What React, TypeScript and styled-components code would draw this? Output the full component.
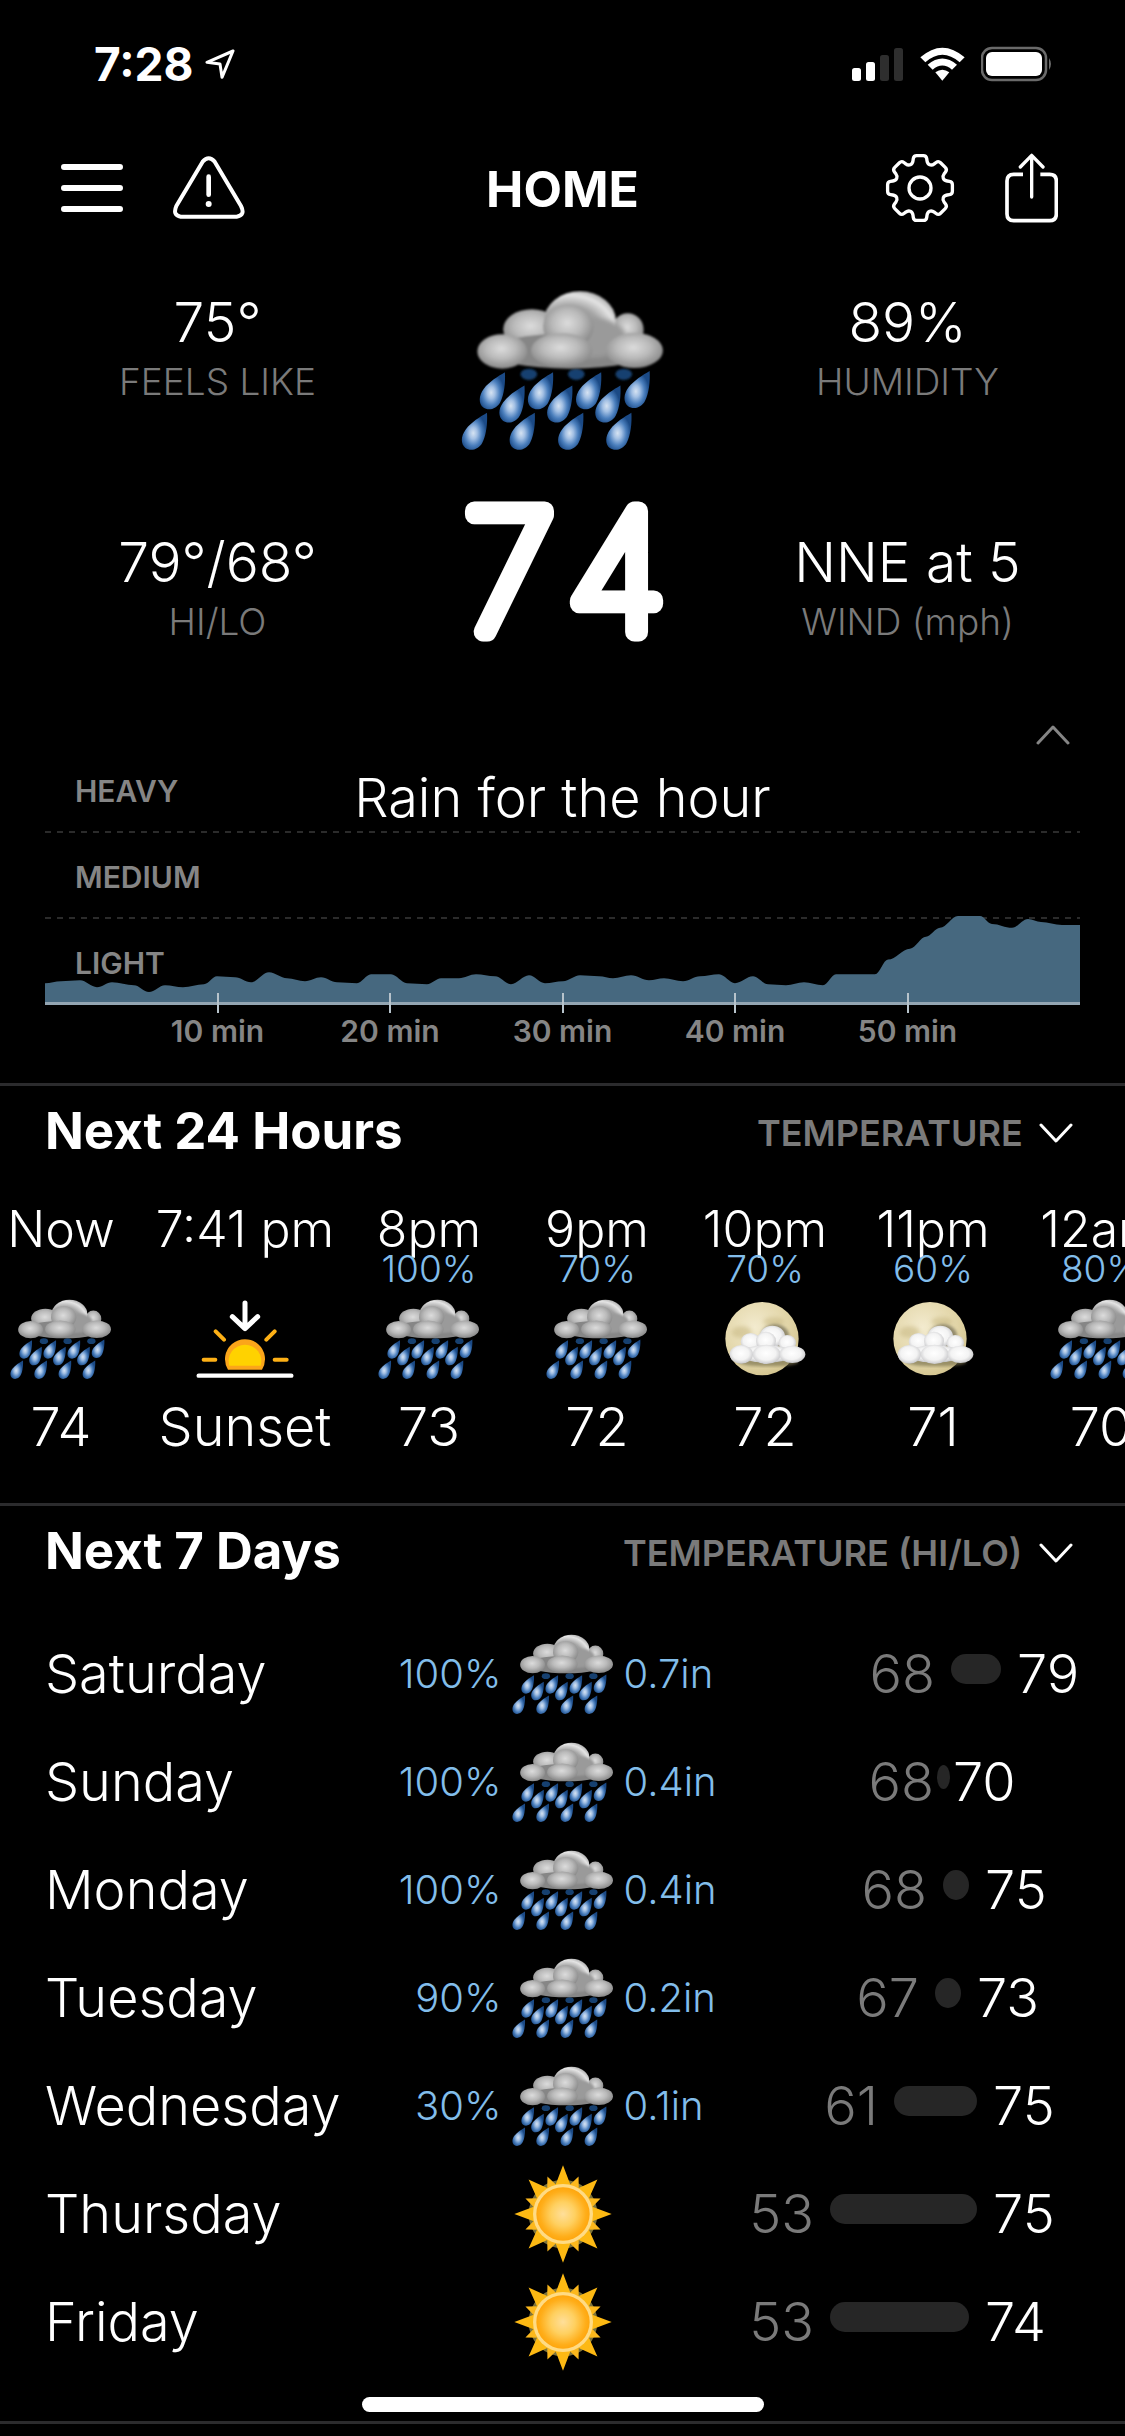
import React from "react";
import styled, { createGlobalStyle } from "styled-components";

const GlobalStyle = createGlobalStyle`
  * { box-sizing: border-box; }
  body {
    margin: 0;
    background: #000;
    color: #fff;
    font-family: Inter, "Liberation Sans", sans-serif;
    font-weight: 300;
  }
  button, select {
    margin: 0;
    padding: 0;
    border: 0;
    background: none;
    color: inherit;
    font: inherit;
    cursor: pointer;
  }
  ol { margin: 0; padding: 0; list-style: none; }
  h1, h2, p { margin: 0; }
  svg { display: block; flex: none; }
`;

/* ---------- page frame ---------- */

const Page = styled.div`
  overflow: hidden;
`;

const StatusBar = styled.div`
  display: flex;
  align-items: center;
  justify-content: space-between;
  height: 128px;
  padding: 0 72px 0 94px;
`;

const StatusGroup = styled.div<{ $gap: number }>`
  display: flex;
  align-items: center;
  gap: ${(p) => p.$gap}px;
`;

const Clock = styled.span`
  font-size: 46px;
  font-weight: 700;
  line-height: 48px;
`;

const NavBar = styled.header`
  display: grid;
  grid-template-columns: 1fr auto 1fr;
  align-items: center;
  height: 120px;
  padding: 0 61px;
`;

const NavActions = styled.div<{ $end?: boolean }>`
  display: flex;
  align-items: center;
  justify-content: ${(p) => (p.$end ? "flex-end" : "flex-start")};
  gap: 50px;
  padding-right: ${(p) => (p.$end ? 6 : 0)}px;
`;

const Title = styled.h1`
  padding-top: 2px;
  font-size: 50px;
  font-weight: 700;
  line-height: 56px;
`;

const IconButton = styled.button`
  display: flex;
`;

const HomeIndicator = styled.div`
  position: fixed;
  bottom: 24px;
  left: 50%;
  width: 402px;
  height: 15px;
  margin-left: -201px;
  border-radius: 8px;
  background: #fff;
`;

/* ---------- current conditions ---------- */

const Conditions = styled.section`
  display: grid;
  grid-template-columns: 1fr 1fr 1fr;
  padding: 42px 45px 73px;
`;

const StatColumn = styled.div`
  display: flex;
  flex-direction: column;
  gap: 124px;
  text-align: center;
`;

const StatValue = styled.p`
  margin-bottom: 4px;
  font-size: 55px;
  line-height: 64px;
`;

const StatLabel = styled.p`
  color: #7a7a7a;
  font-size: 37px;
  line-height: 48px;
`;

const NowColumn = styled.div`
  display: flex;
  flex-direction: column;
  align-items: center;
  gap: 38px;
`;

const NowTemp = styled.svg`
  overflow: visible;
  text {
    fill: #fff;
    stroke: #fff;
    stroke-width: 19px;
    stroke-linejoin: round;
    font-size: 166px;
    font-weight: 100;
    font-kerning: none;
    font-variant-numeric: tabular-nums;
    text-anchor: middle;
  }
`;

/* ---------- rain chart ---------- */

const RainSection = styled.section`
  padding: 0 45px 34px;
`;

const CollapseButton = styled.button`
  display: flex;
  align-items: center;
  justify-content: center;
  width: 54px;
  height: 24px;
  margin-left: auto;
`;

const Plot = styled.div`
  position: relative;
`;

const Band = styled.div<{ $ruled?: boolean }>`
  display: grid;
  grid-template-columns: 1fr auto 1fr;
  align-items: center;
  height: 86px;
  padding: 2px 30px 0;
  background: ${(p) =>
    p.$ruled
      ? "repeating-linear-gradient(90deg, #2b2b2b 0 6px, transparent 6px 12px) bottom / 100% 2px no-repeat"
      : "none"};
`;

const BandLabel = styled.span`
  position: relative;
  z-index: 1;
  color: #858585;
  font-size: 30px;
  font-weight: 600;
  line-height: 36px;
`;

const RainSummary = styled.p`
  padding-top: 14px;
  font-size: 54px;
  line-height: 64px;
`;

const AreaLayer = styled.div`
  position: absolute;
  inset: 0;
  border-bottom: 3px solid #93a5b2;
  svg { width: 100%; height: 100%; }
`;

const Axis = styled.div`
  position: relative;
  display: grid;
  grid-template-columns: 1fr repeat(5, 2fr) 1fr;
  margin-top: -12px;
`;

const Tick = styled.span`
  display: flex;
  flex-direction: column;
  align-items: center;
  color: #858585;
  font-size: 30px;
  font-weight: 600;
  line-height: 36px;
  &::before {
    content: "";
    width: 2px;
    height: 20px;
    background: #b7c3cb;
  }
  &:first-child { grid-column: 2; }
`;

/* ---------- forecast sections ---------- */

const Forecast = styled.section`
  border-top: 3px solid #2b2b2d;
`;

const ForecastHeader = styled.div`
  display: flex;
  align-items: center;
  justify-content: space-between;
  height: 90px;
  padding: 0 52px 0 45px;
`;

const Heading = styled.h2`
  font-size: 51px;
  font-weight: 700;
  line-height: 56px;
`;

const Picker = styled.label`
  display: flex;
  align-items: center;
  gap: 16px;
  padding-top: 4px;
`;

const PickerSelect = styled.select`
  appearance: none;
  color: #7a7a7a;
  font-size: 36px;
  font-weight: 600;
  line-height: 44px;
  outline: none;
`;

const HourStrip = styled.ol`
  display: flex;
  overflow: hidden;
  margin-left: -23px;
  padding: 29px 0 48px;
`;

const HourCell = styled.li<{ $wide?: boolean }>`
  display: flex;
  flex: none;
  flex-direction: column;
  align-items: center;
  width: ${(p) => (p.$wide ? 200 : 168)}px;
`;

const HourTime = styled.span`
  font-size: 50px;
  line-height: 48px;
  white-space: nowrap;
`;

const HourChance = styled.span`
  height: 32px;
  color: #82bdea;
  font-size: 37px;
  line-height: 32px;
`;

const HourIcon = styled.span`
  display: flex;
  align-items: center;
  height: 80px;
  margin: 14px 0 20px;
`;

const HourTemp = styled.span`
  font-size: 54px;
  line-height: 56px;
`;

const DayList = styled.ol`
  padding: 24px 45px 45px;
`;

const DayRow = styled.li`
  display: grid;
  grid-template-columns: 1fr 110px 104px 110px 1fr;
  column-gap: 9px;
  align-items: center;
  height: 108px;
`;

const DayName = styled.span`
  font-size: 54px;
  line-height: 64px;
`;

const Precip = styled.span<{ $end?: boolean }>`
  color: #82bdea;
  font-size: 40px;
  line-height: 48px;
  text-align: ${(p) => (p.$end ? "right" : "left")};
  white-space: nowrap;
`;

const DayIcon = styled.span`
  display: flex;
  justify-content: center;
`;

const Range = styled.span`
  display: flex;
  align-items: center;
  justify-content: flex-end;
  font-size: 54px;
  line-height: 64px;
`;

const Low = styled.span`
  color: #7a7a7a;
`;

const High = styled.span`
  width: 63px;
`;

const RangeBar = styled.span<{ $round: boolean }>`
  flex: none;
  border-radius: ${(p) => (p.$round ? "50%" : "15px")};
  background: #262626;
`;

const BottomRule = styled.div`
  height: 15px;
  border-top: 3px solid #2b2b2d;
`;

/* ---------- weather artwork ---------- */

function ArtDefs() {
  return (
    <svg width="0" height="0" style={{ position: "absolute" }} aria-hidden="true">
      <defs>
        <radialGradient id="puff" cx="0.48" cy="0.42" r="0.64">
          <stop offset="0" stopColor="#dcdcdc" />
          <stop offset="0.45" stopColor="#bbbbbb" />
          <stop offset="0.85" stopColor="#8e8e8e" />
          <stop offset="1" stopColor="#7c7c7c" />
        </radialGradient>
        <radialGradient id="puffRim" cx="0.35" cy="0.7" r="0.75">
          <stop offset="0" stopColor="#8c8c8c" />
          <stop offset="0.6" stopColor="#a4a4a4" />
          <stop offset="0.85" stopColor="#e4e4e4" />
          <stop offset="1" stopColor="#b0b0b0" />
        </radialGradient>
        <radialGradient id="puffWhite" cx="0.48" cy="0.45" r="0.58">
          <stop offset="0" stopColor="#ffffff" />
          <stop offset="0.6" stopColor="#f3f3f3" />
          <stop offset="0.9" stopColor="#cfcfd1" />
          <stop offset="1" stopColor="#a9a9ab" />
        </radialGradient>
        <radialGradient id="drop" cx="0.45" cy="0.55" r="0.52">
          <stop offset="0" stopColor="#d6e3f2" />
          <stop offset="0.3" stopColor="#a3c0e4" />
          <stop offset="0.65" stopColor="#4b7fbd" />
          <stop offset="1" stopColor="#1b4a86" />
        </radialGradient>
        <radialGradient id="moon" cx="0.4" cy="0.35" r="0.7">
          <stop offset="0" stopColor="#f3ebcf" />
          <stop offset="0.6" stopColor="#e4d8ac" />
          <stop offset="1" stopColor="#d3c48e" />
        </radialGradient>
        <radialGradient id="sunDisc" cx="0.5" cy="0.5" r="0.5">
          <stop offset="0" stopColor="#ffdf9a" />
          <stop offset="0.45" stopColor="#ffd060" />
          <stop offset="0.85" stopColor="#ffae1a" />
          <stop offset="1" stopColor="#ffa60d" />
        </radialGradient>
        <filter id="soft" x="-10%" y="-10%" width="120%" height="120%">
          <feGaussianBlur stdDeviation="4" />
        </filter>
        <filter id="softer" x="-20%" y="-20%" width="140%" height="140%">
          <feGaussianBlur stdDeviation="7" />
        </filter>
        <path
          id="raindrop"
          d="M2 0C4 30 0 68 -12 90C-23 111 -48 117 -63 106C-78 94 -77 70 -62 50C-44 27 -20 13 2 0Z"
        />
      </defs>
    </svg>
  );
}

const dropTips = [
  [252, 336], [397, 336], [542, 336], [688, 332],
  [311, 376], [455, 376], [600, 376],
  [198, 458], [342, 458], [488, 458], [633, 458],
];

function RainIcon({ width }: { width: number }) {
  return (
    <svg width={width} height={Math.round(width * 0.795)} viewBox="122 88 614 488" role="img" aria-label="Rain">
      <g fill="#17406f" filter="url(#soft)">
        <ellipse cx="326" cy="342" rx="25" ry="17" />
        <ellipse cx="469" cy="342" rx="25" ry="17" />
        <ellipse cx="612" cy="342" rx="25" ry="17" />
      </g>
      <g fill="url(#drop)">
        {dropTips.map(([x, y]) => (
          <use key={`${x}-${y}`} href="#raindrop" x={x} y={y} />
        ))}
      </g>
      <g filter="url(#soft)">
        <ellipse cx="335" cy="206" rx="86" ry="60" fill="url(#puff)" />
        <ellipse cx="624" cy="208" rx="48" ry="50" fill="url(#puff)" />
        <ellipse cx="480" cy="180" rx="108" ry="88" fill="url(#puffRim)" />
        <ellipse cx="450" cy="272" rx="240" ry="53" fill="#868686" />
        <ellipse cx="520" cy="232" rx="98" ry="60" fill="#9a9a9a" filter="url(#softer)" />
        <ellipse cx="445" cy="198" rx="76" ry="66" fill="url(#puff)" />
        <ellipse cx="246" cy="273" rx="75" ry="52" fill="url(#puff)" />
        <ellipse cx="425" cy="270" rx="92" ry="52" fill="url(#puff)" />
        <ellipse cx="644" cy="270" rx="86" ry="53" fill="url(#puff)" />
      </g>
    </svg>
  );
}

function MoonCloudIcon() {
  return (
    <svg width="81" height="76" viewBox="75 66 243 228" role="img" aria-label="Partly cloudy night">
      <circle cx="186" cy="179" r="110" fill="url(#moon)" />
      <g fill="#c9ba85" opacity="0.6" filter="url(#softer)">
        <ellipse cx="125" cy="160" rx="30" ry="18" />
        <ellipse cx="222" cy="128" rx="32" ry="13" />
      </g>
      <ellipse cx="205" cy="250" rx="90" ry="12" fill="#7d744f" opacity="0.7" filter="url(#soft)" />
      <ellipse cx="225" cy="172" rx="42" ry="36" fill="#5c5640" opacity="0.6" filter="url(#soft)" />
      <g fill="url(#puffWhite)">
        <ellipse cx="217" cy="172" rx="38" ry="32" />
        <ellipse cx="152" cy="188" rx="30" ry="26" />
        <ellipse cx="262" cy="192" rx="26" ry="24" />
        <ellipse cx="198" cy="186" rx="30" ry="28" />
        <ellipse cx="200" cy="225" rx="80" ry="26" />
        <ellipse cx="124" cy="226" rx="35" ry="28" />
        <ellipse cx="200" cy="226" rx="42" ry="29" />
        <ellipse cx="277" cy="226" rx="39" ry="26" />
      </g>
    </svg>
  );
}

function SunsetIcon() {
  return (
    <svg width="98" height="80" viewBox="588 58 294 240" fill="none" strokeLinecap="round" role="img" aria-label="Sunset">
      <path d="M684 270A60 60 0 1 1 786 270Z" fill="#fba51a" />
      <path d="M688 258A49 49 0 1 1 782 258Z" fill="#ffd200" />
      <path d="M647 155L672 180M824 155L799 180M611 240H646M824 240H860" stroke="#fdb016" strokeWidth="12" />
      <path d="M735 70V145M697 111L735 147L773 111" stroke="#fff" strokeWidth="15" strokeLinejoin="round" />
      <path d="M596 288H874" stroke="#fff" strokeWidth="13" />
    </svg>
  );
}

function rays(count: number, offset: number, tip: number, base: number, half: number) {
  let d = "";
  for (let i = 0; i < count; i++) {
    const a = offset + (i * 2 * Math.PI) / count;
    const px = Math.cos(a);
    const py = Math.sin(a);
    d += `M${px * tip} ${py * tip}L${px * base - py * half} ${py * base + px * half}L${px * base + py * half} ${py * base - px * half}Z`;
  }
  return d;
}

function SunIcon() {
  return (
    <svg width="98" height="98" viewBox="-147 -147 294 294" role="img" aria-label="Sunny">
      <circle r="103" fill="#a89a4e" opacity="0.75" />
      <path d={rays(8, Math.PI / 8, 122, 78, 19)} fill="#fcb81c" />
      <path d={rays(8, 0, 146, 80, 25)} fill="#fdb913" />
      <circle r="90" fill="#ffdb84" />
      <circle r="80" fill="url(#sunDisc)" />
    </svg>
  );
}

/* ---------- interface icons ---------- */

function gearPath(cx: number, cy: number) {
  const pts: number[][] = [];
  for (let i = 0; i < 8; i++) {
    const mid = i * 45 - 90;
    [[-17, 76], [-11, 99], [11, 99], [17, 76]].forEach(([a, r]) => {
      const t = ((mid + a) * Math.PI) / 180;
      pts.push([cx + r * Math.cos(t), cy + r * Math.sin(t)]);
    });
  }
  const toward = (a: number[], b: number[], dist: number) => {
    const len = Math.hypot(b[0] - a[0], b[1] - a[1]);
    const k = Math.min(0.5, dist / len);
    return [a[0] + (b[0] - a[0]) * k, a[1] + (b[1] - a[1]) * k];
  };
  return (
    pts
      .map((p, i) => {
        const prev = pts[(i + pts.length - 1) % pts.length];
        const next = pts[(i + 1) % pts.length];
        const s = toward(p, prev, 9);
        const e = toward(p, next, 9);
        return `${i === 0 ? "M" : "L"}${s.join(" ")}Q${p.join(" ")} ${e.join(" ")}`;
      })
      .join("") + "Z"
  );
}

const strokeProps = {
  fill: "none",
  stroke: "#fff",
  strokeLinecap: "round",
  strokeLinejoin: "round",
} as const;

const MenuIcon = () => (
  <svg width="62" height="50" viewBox="0 0 62 50" {...strokeProps} strokeWidth="6">
    <path d="M3 4H59M3 25H59M3 46H59" />
  </svg>
);

const AlertIcon = () => (
  <svg width="72" height="64" viewBox="365 376 216 192" {...strokeProps} strokeWidth="12">
    <path d="M454 393Q472 373 490 393L569 526Q583 554 556 558H388Q363 554 375 526Z" />
    <path d="M472 438V492" strokeWidth="14" />
    <circle cx="472" cy="520" r="9" fill="#fff" stroke="none" />
  </svg>
);

const GearIcon = () => (
  <svg width="70" height="70" viewBox="-105 -105 210 210" {...strokeProps} strokeWidth="10">
    <path d={gearPath(0, 0)} />
    <circle r="33" />
  </svg>
);

const ShareIcon = () => (
  <svg width="53" height="70" viewBox="482 366 159 210" {...strokeProps} strokeWidth="11">
    <path d="M536 430H508Q488 430 488 450V549Q488 569 508 569H616Q636 569 636 549V450Q636 430 616 430H588" strokeLinecap="butt" />
    <path d="M562 374V498M528 408L562 373L596 408" strokeWidth="10" />
  </svg>
);

const LocationIcon = () => (
  <svg width="30" height="30" viewBox="466 56 90 90" {...strokeProps} strokeWidth="9">
    <path d="M550 62L472 96L511 101L517 141Z" />
  </svg>
);

const SignalIcon = () => (
  <svg width="52" height="33" viewBox="0 0 52 33">
    <rect x="0" y="20" width="9" height="13" rx="2.5" fill="#fff" />
    <rect x="14" y="14" width="9" height="19" rx="2.5" fill="#fff" />
    <rect x="28" y="7" width="9" height="26" rx="2.5" fill="#2e2e2e" />
    <rect x="42" y="0" width="9" height="33" rx="2.5" fill="#2e2e2e" />
  </svg>
);

const WifiIcon = () => (
  <svg width="45" height="34" viewBox="225 49 135 102" fill="#fff">
    <path d="M226 80Q292 22 359 80L344 95Q292 50 241 95Z" />
    <path d="M248 102Q292 65 336 102L321 117Q292 92 263 117Z" />
    <path d="M271 125Q292 110 313 125L292 150Z" />
  </svg>
);

const BatteryIcon = () => (
  <svg width="72" height="36" viewBox="0 0 72 36">
    <rect x="1" y="2" width="64" height="32" rx="10" fill="none" stroke="#6a6a6a" strokeWidth="2.5" />
    <rect x="5" y="6" width="56" height="24" rx="6" fill="#fff" />
    <path d="M68 12Q72 18 68 24Z" fill="#6a6a6a" />
  </svg>
);

const Chevron = ({ up, color }: { up?: boolean; color: string }) => (
  <svg width="34" height="20" viewBox="0 0 34 20" {...strokeProps} stroke={color} strokeWidth="3">
    <path d={up ? "M2 18L17 2L32 18" : "M2 2L17 18L32 2"} />
  </svg>
);

/* ---------- data ---------- */

const rainCurve: [number, number][] = [
  [0, 19], [16, 21], [35, 22], [52, 15], [67, 20], [89, 17], [104, 10], [120, 17], [138, 15],
  [159, 18], [172, 26], [190, 25], [206, 20], [224, 30], [242, 24], [260, 21], [276, 25],
  [292, 20], [312, 19], [326, 28], [346, 28], [362, 19], [382, 18], [396, 24], [414, 24],
  [431, 28], [450, 26], [466, 18], [484, 27], [500, 19], [518, 21], [535, 27], [554, 26],
  [568, 24], [586, 27], [604, 22], [619, 24], [638, 21], [655, 26], [674, 28], [690, 19],
  [708, 26], [723, 18], [741, 17], [759, 20], [778, 17], [791, 28], [830, 28], [843, 43],
  [865, 54], [881, 66], [895, 75], [913, 87], [935, 87], [947, 79], [967, 75], [983, 84],
  [996, 81], [1017, 78], [1035, 78],
];

function areaPath() {
  const h = 258;
  let d = `M0 ${h}L0 ${h - rainCurve[0][1]}`;
  for (let i = 1; i < rainCurve.length; i++) {
    const [x0, y0] = rainCurve[i - 1];
    const [x1, y1] = rainCurve[i];
    const t = (x1 - x0) * 0.35;
    d += `C${x0 + t} ${h - y0} ${x1 - t} ${h - y1} ${x1} ${h - y1}`;
  }
  return d + `L1035 ${h}Z`;
}

type Sky = "rain" | "sunset" | "moon" | "sun";

const hours: { time: string; chance?: string; sky: Sky; temp: string }[] = [
  { time: "Now", sky: "rain", temp: "74" },
  { time: "7:41 pm", sky: "sunset", temp: "Sunset" },
  { time: "8pm", chance: "100%", sky: "rain", temp: "73" },
  { time: "9pm", chance: "70%", sky: "rain", temp: "72" },
  { time: "10pm", chance: "70%", sky: "moon", temp: "72" },
  { time: "11pm", chance: "60%", sky: "moon", temp: "71" },
  { time: "12am", chance: "80%", sky: "rain", temp: "70" },
];

const days: {
  name: string; chance?: string; sky: Sky; amount?: string;
  low: number; high: number; bar: number; inset: number;
}[] = [
  { name: "Saturday", chance: "100%", sky: "rain", amount: "0.7in", low: 68, high: 79, bar: 50, inset: 0 },
  { name: "Sunday", chance: "100%", sky: "rain", amount: "0.4in", low: 68, high: 70, bar: 13, inset: 64 },
  { name: "Monday", chance: "100%", sky: "rain", amount: "0.4in", low: 68, high: 75, bar: 26, inset: 32 },
  { name: "Tuesday", chance: "90%", sky: "rain", amount: "0.2in", low: 67, high: 73, bar: 26, inset: 40 },
  { name: "Wednesday", chance: "30%", sky: "rain", amount: "0.1in", low: 61, high: 75, bar: 83, inset: 24 },
  { name: "Thursday", sky: "sun", low: 53, high: 75, bar: 147, inset: 24 },
  { name: "Friday", sky: "sun", low: 53, high: 74, bar: 139, inset: 32 },
];

function SkyIcon({ sky }: { sky: Sky }) {
  if (sky === "sunset") return <SunsetIcon />;
  if (sky === "moon") return <MoonCloudIcon />;
  if (sky === "sun") return <SunIcon />;
  return <RainIcon width={102} />;
}

function Stat({ value, label }: { value: string; label: string }) {
  return (
    <div>
      <StatValue>{value}</StatValue>
      <StatLabel>{label}</StatLabel>
    </div>
  );
}

function SectionHeader({ title, metric }: { title: string; metric: string }) {
  return (
    <ForecastHeader>
      <Heading>{title}</Heading>
      <Picker>
        <PickerSelect aria-label={title}>
          <option>{metric}</option>
        </PickerSelect>
        <Chevron color="#fff" />
      </Picker>
    </ForecastHeader>
  );
}

export default function App() {
  return (
    <Page>
      <GlobalStyle />
      <ArtDefs />

      <StatusBar>
        <StatusGroup $gap={12}>
          <Clock>7:28</Clock>
          <LocationIcon />
        </StatusGroup>
        <StatusGroup $gap={16}>
          <SignalIcon />
          <WifiIcon />
          <BatteryIcon />
        </StatusGroup>
      </StatusBar>

      <NavBar>
        <NavActions>
          <IconButton aria-label="Menu"><MenuIcon /></IconButton>
          <IconButton aria-label="Alerts"><AlertIcon /></IconButton>
        </NavActions>
        <Title>HOME</Title>
        <NavActions $end>
          <IconButton aria-label="Settings"><GearIcon /></IconButton>
          <IconButton aria-label="Share"><ShareIcon /></IconButton>
        </NavActions>
      </NavBar>

      <Conditions>
        <StatColumn>
          <Stat value="75°" label="FEELS LIKE" />
          <Stat value="79°/68°" label="HI/LO" />
        </StatColumn>
        <NowColumn>
          <RainIcon width={204} />
          <NowTemp width="220" height="160" viewBox="0 0 220 160">
            <text x="110" y="142">74</text>
          </NowTemp>
        </NowColumn>
        <StatColumn>
          <Stat value="89%" label="HUMIDITY" />
          <Stat value="NNE at 5" label="WIND (mph)" />
        </StatColumn>
      </Conditions>

      <RainSection>
        <CollapseButton aria-label="Collapse chart"><Chevron up color="#858585" /></CollapseButton>
        <Plot>
          <Band $ruled>
            <BandLabel>HEAVY</BandLabel>
            <RainSummary>Rain for the hour</RainSummary>
          </Band>
          <Band $ruled><BandLabel>MEDIUM</BandLabel></Band>
          <Band><BandLabel>LIGHT</BandLabel></Band>
          <AreaLayer>
            <svg viewBox="0 0 1035 258" preserveAspectRatio="none" aria-hidden="true">
              <path d={areaPath()} fill="#46687f" />
            </svg>
          </AreaLayer>
        </Plot>
        <Axis>
          {[10, 20, 30, 40, 50].map((m) => (
            <Tick key={m}>{m} min</Tick>
          ))}
        </Axis>
      </RainSection>

      <Forecast>
        <SectionHeader title="Next 24 Hours" metric="TEMPERATURE" />
        <HourStrip>
          {hours.map((h) => (
            <HourCell key={h.time} $wide={h.sky === "sunset"}>
              <HourTime>{h.time}</HourTime>
              <HourChance>{h.chance}</HourChance>
              <HourIcon><SkyIcon sky={h.sky} /></HourIcon>
              <HourTemp>{h.temp}</HourTemp>
            </HourCell>
          ))}
        </HourStrip>
      </Forecast>

      <Forecast>
        <SectionHeader title="Next 7 Days" metric="TEMPERATURE (HI/LO)" />
        <DayList>
          {days.map((d) => (
            <DayRow key={d.name}>
              <DayName>{d.name}</DayName>
              <Precip $end>{d.chance}</Precip>
              <DayIcon><SkyIcon sky={d.sky} /></DayIcon>
              <Precip>{d.amount}</Precip>
              <Range style={{ paddingRight: d.inset }}>
                <Low>{d.low}</Low>
                <RangeBar
                  $round={d.bar < 30}
                  style={{
                    width: d.bar,
                    height: Math.min(30, d.bar + 11),
                    margin: d.bar < 20 ? "0 3px 10px" : "0 16px 10px",
                  }}
                />
                <High>{d.high}</High>
              </Range>
            </DayRow>
          ))}
        </DayList>
      </Forecast>

      <BottomRule />
      <HomeIndicator />
    </Page>
  );
}
